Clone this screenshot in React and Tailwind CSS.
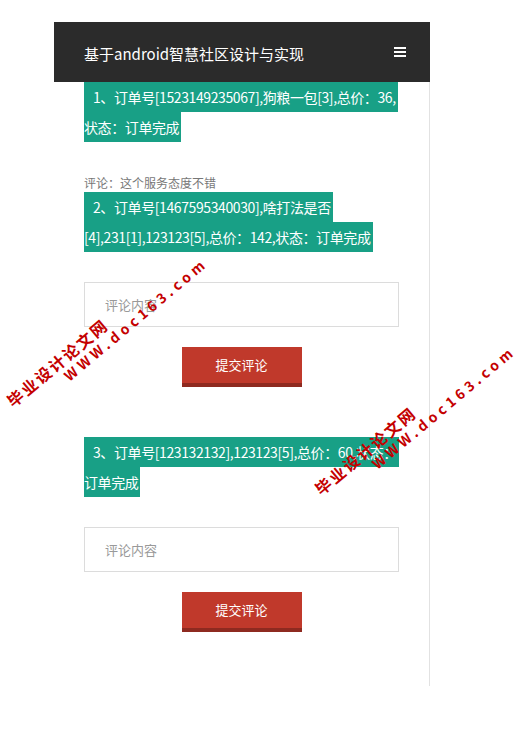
import React from 'react';

const font = { fontFamily: '"Noto Sans CJK SC", "Noto Sans", sans-serif' };

const orders = [
  {
    id: 1,
    lines: ['1、订单号[1523149235067],狗粮一包[3],总价：36,', '状态：订单完成'],
    comment: '评论：这个服务态度不错',
  },
  {
    id: 2,
    lines: ['2、订单号[1467595340030],啥打法是否', '[4],231[1],123123[5],总价：142,状态：订单完成'],
  },
  {
    id: 3,
    lines: ['3、订单号[123132132],123123[5],总价：60,状态：', '订单完成'],
  },
];

const OrderTitle = ({ lines }) => (
  <div className="flex flex-col items-start">
    {lines.map((line, i) => (
      <div
        key={i}
        className={`bg-[#18a086] text-white text-[14px] tracking-[-0.4px] leading-[30px] h-[30px] whitespace-nowrap pr-[2px] ${i === 0 ? 'pl-[9px]' : ''}`}
      >
        {line}
      </div>
    ))}
  </div>
);

const CommentForm = () => (
  <div className="mt-[30px]">
    <div className="h-[45px] border border-[#dcdcdc] bg-white flex items-center pl-[20px] text-[13px] text-[#999]">
      评论内容
    </div>
    <div className="flex justify-center mt-[20px]">
      <button className="w-[120px] h-[40px] bg-[#c0392b] border-b-4 border-[#8e2a20] text-white text-[13px]">
        提交评论
      </button>
    </div>
  </div>
);

const Watermark = ({ className }) => (
  <div className={`absolute pointer-events-none origin-left -rotate-[40deg] font-bold text-[#c40000] ${className}`} style={font}>
    <div className="text-[16px] tracking-[2px] leading-[18px]">毕业设计论文网</div>
    <div className="text-[14px] tracking-[4px] leading-[16px] pl-[60px]">WWW.doc163.com</div>
  </div>
);

export default function App() {
  return (
    <div className="relative w-[524px] h-[754px] bg-white overflow-hidden" style={font}>
      <div className="ml-[54px] pt-[22px] w-[376px]">
        <div className="h-[60px] bg-[#2b2b2b] flex items-center justify-between pl-[30px] pr-[24px]">
          <span className="text-white text-[15px] pt-[5px]">基于android智慧社区设计与实现</span>
          <svg width="12" height="10" viewBox="0 0 12 10">
            <rect x="0" y="0" width="12" height="2" fill="#fff" />
            <rect x="0" y="4" width="12" height="2" fill="#fff" />
            <rect x="0" y="8" width="12" height="2" fill="#fff" />
          </svg>
        </div>
        <div className="border-r border-[#e2e2e2] h-[604px] pl-[30px] pr-[30px]">
          {orders.map((o, idx) => (
            <div key={o.id} className={idx === 2 ? 'mt-[50px]' : ''}>
              <OrderTitle lines={o.lines} />
              {o.comment ? (
                <div className="mt-[32px] text-[12px] leading-[18px] text-[#777]">{o.comment}</div>
              ) : (
                <CommentForm />
              )}
            </div>
          ))}
        </div>
      </div>
      <Watermark className="left-[14px] top-[392px]" />
      <Watermark className="left-[322px] top-[480px]" />
    </div>
  );
}
